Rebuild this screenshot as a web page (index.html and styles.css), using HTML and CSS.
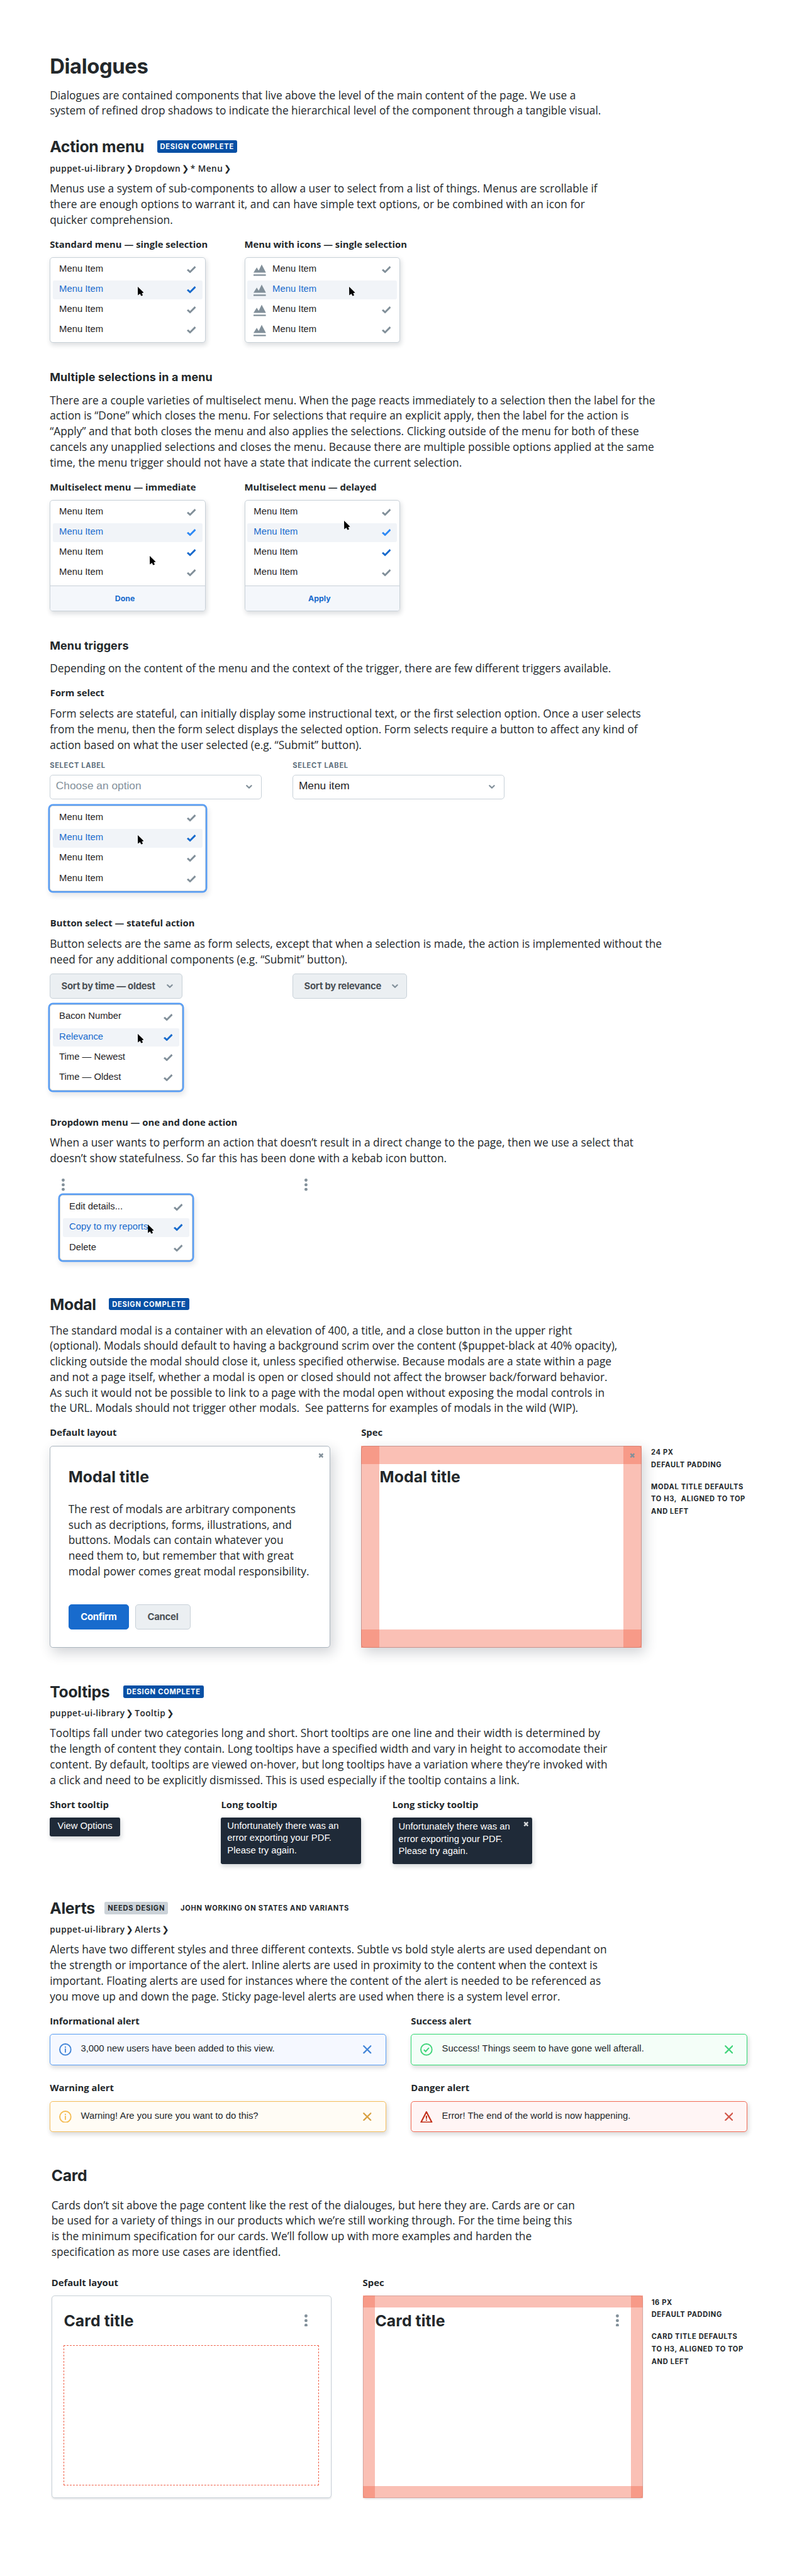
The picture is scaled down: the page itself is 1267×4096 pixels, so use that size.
FILE: index.html
```html
<!DOCTYPE html>
<html lang="en">
<head>
<meta charset="utf-8">
<title>Dialogues</title>
<link rel="stylesheet" href="styles.css">
</head>
<body>
<svg class="sprite" aria-hidden="true">
  <symbol id="check" viewBox="0 0 70 55"><path d="M0 33 10 23 25 36 60 0 70 11 25 55Z" fill="currentColor"/></symbol>
  <symbol id="cursor" viewBox="0 0 47 72"><path d="M0 0 47 46 31 48 39 66 27 72 17 53 1 66Z" fill="#000"/></symbol>
  <symbol id="chevron" viewBox="0 0 48 30"><path d="M6 6 24 23 42 6" fill="none" stroke="currentColor" stroke-width="11" stroke-linecap="round"/></symbol>
  <symbol id="chart" viewBox="0 0 32 32"><path d="M0 23.6 8.4 10l4.9 8L21 2.6l11 21zM0 28h32v4H0z" fill="currentColor"/></symbol>
  <symbol id="kebab" viewBox="0 0 8 32"><circle cx="4" cy="4" r="4" fill="currentColor"/><circle cx="4" cy="16" r="4" fill="currentColor"/><circle cx="4" cy="28" r="4" fill="currentColor"/></symbol>
  <symbol id="close" viewBox="0 0 14 14"><path d="M2.2 2.2 11.8 11.8M11.8 2.2 2.2 11.8" fill="none" stroke="currentColor" stroke-width="4"/></symbol>
  <symbol id="dismiss" viewBox="0 0 22 22"><path d="M2 2 20 20M20 2 2 20" fill="none" stroke="currentColor" stroke-width="3.6" stroke-linecap="round"/></symbol>
  <symbol id="info" viewBox="0 0 32 32"><circle cx="16" cy="16" r="14.3" fill="none" stroke="currentColor" stroke-width="3.2"/><path d="M14.5 8h3v3.4h-3zM14.5 13.5h3v10.5h-3z" fill="currentColor"/></symbol>
  <symbol id="success" viewBox="0 0 32 32"><circle cx="16" cy="16" r="14.3" fill="none" stroke="currentColor" stroke-width="3.2"/><path d="M9.5 16.5 14 21l8.5-9.5" fill="none" stroke="currentColor" stroke-width="3.2"/></symbol>
  <symbol id="danger" viewBox="0 0 32 32"><path d="M16 3.2 2.2 30h27.6z" fill="none" stroke="currentColor" stroke-width="3.4" stroke-linejoin="round"/><path d="M14.4 13h3.2v8h-3.2zM14.4 23h3.2v3h-3.2z" fill="currentColor"/></symbol>
</svg>

<main class="page">
  <h1>Dialogues</h1>
  <p class="lead">Dialogues are contained components that live above the level of the main content of the page. We use a<br>system of refined drop shadows to indicate the hierarchical level of the component through a tangible visual.</p>

  <section class="section action">
    <header class="head"><h2>Action menu</h2><span class="badge">DESIGN COMPLETE</span></header>
    <nav class="crumbs">puppet-ui-library <i>❯</i> Dropdown <i>❯</i> * Menu <i>❯</i></nav>
    <p>Menus use a system of sub-components to allow a user to select from a list of things. Menus are scrollable if<br>there are enough options to warrant it, and can have simple text options, or be combined with an icon for<br>quicker comprehension.</p>

    <div class="menus">
      <figure>
        <figcaption>Standard menu — single selection</figcaption>
        <div class="menu">
          <div class="item"><span>Menu Item</span><svg class="check"><use href="#check"/></svg></div>
          <div class="item active"><span>Menu Item</span><svg class="check"><use href="#check"/></svg></div>
          <div class="item"><span>Menu Item</span><svg class="check"><use href="#check"/></svg></div>
          <div class="item"><span>Menu Item</span><svg class="check"><use href="#check"/></svg></div>
          <svg class="cursor"><use href="#cursor"/></svg>
        </div>
      </figure>
      <figure>
        <figcaption>Menu with icons — single selection</figcaption>
        <div class="menu">
          <div class="item"><svg class="chart"><use href="#chart"/></svg><span>Menu Item</span><svg class="check"><use href="#check"/></svg></div>
          <div class="item active"><svg class="chart"><use href="#chart"/></svg><span>Menu Item</span></div>
          <div class="item"><svg class="chart"><use href="#chart"/></svg><span>Menu Item</span><svg class="check"><use href="#check"/></svg></div>
          <div class="item"><svg class="chart"><use href="#chart"/></svg><span>Menu Item</span><svg class="check"><use href="#check"/></svg></div>
          <svg class="cursor cursor-right"><use href="#cursor"/></svg>
        </div>
      </figure>
    </div>

    <h3>Multiple selections in a menu</h3>
    <p class="after-h3">There are a couple varieties of multiselect menu. When the page reacts immediately to a selection then the label for the<br>action is “Done” which closes the menu. For selections that require an explicit apply, then the label for the action is<br>“Apply” and that both closes the menu and also applies the selections. Clicking outside of the menu for both of these<br>cancels any unapplied selections and closes the menu. Because there are multiple possible options applied at the same<br>time, the menu trigger should not have a state that indicate the current selection.</p>

    <div class="menus">
      <figure>
        <figcaption>Multiselect menu — immediate</figcaption>
        <div class="menu">
          <div class="item"><span>Menu Item</span><svg class="check"><use href="#check"/></svg></div>
          <div class="item active light"><span>Menu Item</span><svg class="check"><use href="#check"/></svg></div>
          <div class="item checked"><span>Menu Item</span><svg class="check"><use href="#check"/></svg></div>
          <div class="item"><span>Menu Item</span><svg class="check"><use href="#check"/></svg></div>
          <div class="menu-footer">Done</div>
          <svg class="cursor cursor-low"><use href="#cursor"/></svg>
        </div>
      </figure>
      <figure>
        <figcaption>Multiselect menu — delayed</figcaption>
        <div class="menu">
          <div class="item"><span>Menu Item</span><svg class="check"><use href="#check"/></svg></div>
          <div class="item active light"><span>Menu Item</span><svg class="check"><use href="#check"/></svg></div>
          <div class="item checked"><span>Menu Item</span><svg class="check"><use href="#check"/></svg></div>
          <div class="item"><span>Menu Item</span><svg class="check"><use href="#check"/></svg></div>
          <div class="menu-footer">Apply</div>
          <svg class="cursor cursor-high"><use href="#cursor"/></svg>
        </div>
      </figure>
    </div>

    <h3>Menu triggers</h3>
    <p class="after-h3">Depending on the content of the menu and the context of the trigger, there are few different triggers available.</p>

    <h4>Form select</h4>
    <p class="after-h4">Form selects are stateful, can initially display some instructional text, or the first selection option. Once a user selects<br>from the menu, then the form select displays the selected option. Form selects require a button to affect any kind of<br>action based on what the user selected (e.g. “Submit” button).</p>
    <div class="triggers fields">
      <div class="field"><label>SELECT LABEL</label><div class="select placeholder"><span>Choose an option</span><svg class="chevron"><use href="#chevron"/></svg></div></div>
      <div class="field"><label>SELECT LABEL</label><div class="select"><span>Menu item</span><svg class="chevron"><use href="#chevron"/></svg></div></div>
    </div>
    <div class="menu focus">
      <div class="item"><span>Menu Item</span><svg class="check"><use href="#check"/></svg></div>
      <div class="item active"><span>Menu Item</span><svg class="check"><use href="#check"/></svg></div>
      <div class="item"><span>Menu Item</span><svg class="check"><use href="#check"/></svg></div>
      <div class="item"><span>Menu Item</span><svg class="check"><use href="#check"/></svg></div>
      <svg class="cursor"><use href="#cursor"/></svg>
    </div>

    <h4 class="far">Button select — stateful action</h4>
    <p class="after-h4">Button selects are the same as form selects, except that when a selection is made, the action is implemented without the<br>need for any additional components (e.g. “Submit” button).</p>
    <div class="triggers buttons">
      <div><button class="sort">Sort by time — oldest<svg class="chevron"><use href="#chevron"/></svg></button></div>
      <div><button class="sort sort-short">Sort by relevance<svg class="chevron"><use href="#chevron"/></svg></button></div>
    </div>
    <div class="menu focus narrow">
      <div class="item"><span>Bacon Number</span><svg class="check"><use href="#check"/></svg></div>
      <div class="item active"><span>Relevance</span><svg class="check"><use href="#check"/></svg></div>
      <div class="item"><span>Time — Newest</span><svg class="check"><use href="#check"/></svg></div>
      <div class="item"><span>Time — Oldest</span><svg class="check"><use href="#check"/></svg></div>
      <svg class="cursor"><use href="#cursor"/></svg>
    </div>

    <h4 class="far">Dropdown menu — one and done action</h4>
    <p class="after-h4">When a user wants to perform an action that doesn’t result in a direct change to the page, then we use a select that<br>doesn’t show statefulness. So far this has been done with a kebab icon button.</p>
    <div class="triggers kebabs">
      <svg class="kebab"><use href="#kebab"/></svg>
      <svg class="kebab"><use href="#kebab"/></svg>
    </div>
    <div class="menu focus narrow indent">
      <div class="item"><span>Edit details...</span><svg class="check"><use href="#check"/></svg></div>
      <div class="item active"><span>Copy to my reports</span><svg class="check"><use href="#check"/></svg></div>
      <div class="item"><span>Delete</span><svg class="check"><use href="#check"/></svg></div>
      <svg class="cursor"><use href="#cursor"/></svg>
    </div>
  </section>

  <section class="section modal-section">
    <header class="head"><h2>Modal</h2><span class="badge">DESIGN COMPLETE</span></header>
    <p class="after-h2">The standard modal is a container with an elevation of 400, a title, and a close button in the upper right<br>(optional). Modals should default to having a background scrim over the content ($puppet-black at 40% opacity),<br>clicking outside the modal should close it, unless specified otherwise. Because modals are a state within a page<br>and not a page itself, whether a modal is open or closed should not affect the browser back/forward behavior.<br>As such it would not be possible to link to a page with the modal open without exposing the modal controls in<br>the URL. Modals should not trigger other modals.&nbsp; See patterns for examples of modals in the wild (WIP).</p>
    <div class="samples">
      <figure>
        <figcaption>Default layout</figcaption>
        <div class="modal">
          <svg class="close"><use href="#close"/></svg>
          <div class="title">Modal title</div>
          <p>The rest of modals are arbitrary components<br>such as decriptions, forms, illustrations, and<br>buttons. Modals can contain whatever you<br>need them to, but remember that with great<br>modal power comes great modal responsibility.</p>
          <div class="actions"><button class="primary">Confirm</button><button class="secondary">Cancel</button></div>
        </div>
      </figure>
      <figure>
        <figcaption>Spec</figcaption>
        <div class="modal spec">
          <svg class="close"><use href="#close"/></svg>
          <div class="title">Modal title</div>
        </div>
      </figure>
      <aside class="notes">
        <div>24 PX<br>DEFAULT PADDING</div>
        <div>MODAL TITLE DEFAULTS<br>TO H3,&nbsp; ALIGNED TO TOP<br>AND LEFT</div>
      </aside>
    </div>
  </section>

  <section class="section tooltip-section">
    <header class="head"><h2>Tooltips</h2><span class="badge">DESIGN COMPLETE</span></header>
    <nav class="crumbs">puppet-ui-library <i>❯</i> Tooltip <i>❯</i></nav>
    <p>Tooltips fall under two categories long and short. Short tooltips are one line and their width is determined by<br>the length of content they contain. Long tooltips have a specified width and vary in height to accomodate their<br>content. By default, tooltips are viewed on-hover, but long tooltips have a variation where they’re invoked with<br>a click and need to be explicitly dismissed. This is used especially if the tooltip contains a link.</p>
    <div class="tooltips">
      <figure>
        <figcaption>Short tooltip</figcaption>
        <div class="tooltip short">View Options</div>
      </figure>
      <figure>
        <figcaption>Long tooltip</figcaption>
        <div class="tooltip">Unfortunately there was an<br>error exporting your PDF.<br>Please try again.</div>
      </figure>
      <figure>
        <figcaption>Long sticky tooltip</figcaption>
        <div class="tooltip sticky">Unfortunately there was an<br>error exporting your PDF.<br>Please try again.<svg class="close"><use href="#close"/></svg></div>
      </figure>
    </div>
  </section>

  <section class="section alert-section">
    <header class="head"><h2>Alerts</h2><span class="badge pending">NEEDS DESIGN</span><span class="status">JOHN WORKING ON STATES AND VARIANTS</span></header>
    <nav class="crumbs">puppet-ui-library <i>❯</i> Alerts <i>❯</i></nav>
    <p>Alerts have two different styles and three different contexts. Subtle vs bold style alerts are used dependant on<br>the strength or importance of the alert. Inline alerts are used in proximity to the content when the context is<br>important. Floating alerts are used for instances where the content of the alert is needed to be referenced as<br>you move up and down the page. Sticky page-level alerts are used when there is a system level error.</p>
    <div class="alerts">
      <figure>
        <figcaption>Informational alert</figcaption>
        <div class="alert alert-info"><svg class="alert-icon"><use href="#info"/></svg><span>3,000 new users have been added to this view.</span><svg class="dismiss"><use href="#dismiss"/></svg></div>
      </figure>
      <figure>
        <figcaption>Success alert</figcaption>
        <div class="alert alert-success"><svg class="alert-icon"><use href="#success"/></svg><span>Success! Things seem to have gone well afterall.</span><svg class="dismiss"><use href="#dismiss"/></svg></div>
      </figure>
      <figure>
        <figcaption>Warning alert</figcaption>
        <div class="alert alert-warning"><svg class="alert-icon"><use href="#info"/></svg><span>Warning! Are you sure you want to do this?</span><svg class="dismiss"><use href="#dismiss"/></svg></div>
      </figure>
      <figure>
        <figcaption>Danger alert</figcaption>
        <div class="alert alert-danger"><svg class="alert-icon"><use href="#danger"/></svg><span>Error! The end of the world is now happening.</span><svg class="dismiss"><use href="#dismiss"/></svg></div>
      </figure>
    </div>
  </section>

  <section class="section card-section">
    <header class="head"><h2>Card</h2></header>
    <p>Cards don’t sit above the page content like the rest of the dialouges, but here they are. Cards are or can<br>be used for a variety of things in our products which we’re still working through. For the time being this<br>is the minimum specification for our cards. We’ll follow up with more examples and harden the<br>specification as more use cases are identfied.</p>
    <div class="samples">
      <figure>
        <figcaption>Default layout</figcaption>
        <div class="card">
          <div class="card-head"><div class="title">Card title</div><svg class="kebab"><use href="#kebab"/></svg></div>
          <div class="slot"></div>
        </div>
      </figure>
      <figure>
        <figcaption>Spec</figcaption>
        <div class="card spec">
          <div class="card-head"><div class="title">Card title</div><svg class="kebab"><use href="#kebab"/></svg></div>
        </div>
      </figure>
      <aside class="notes">
        <div>16 PX<br>DEFAULT PADDING</div>
        <div>CARD TITLE DEFAULTS<br>TO H3, ALIGNED TO TOP<br>AND LEFT</div>
      </aside>
    </div>
  </section>
</main>
</body>
</html>
```
FILE: styles.css
```css
html {
  font-size: 6.187px;
}

*,
*::before,
*::after {
  box-sizing: border-box;
}

body {
  margin: 0;
  background: #fff;
  color: #23282b;
  font: 2.8rem/4rem "Open Sans", sans-serif;
}

h1, h2, h3, h4, p, figure {
  margin: 0;
}

svg {
  display: block;
  flex: none;
}

.sprite {
  position: absolute;
  width: 0;
  height: 0;
}

.page {
  width: 100%;
  padding: 14.1rem 0 19.5rem 12.8rem;
  overflow: hidden;
}

p {
  white-space: nowrap;
}

/* Headings */

h1 {
  font: 700 5.3rem/6rem Inter, sans-serif;
  letter-spacing: -0.06rem;
}

.lead {
  margin-top: 2.3rem;
}

.section {
  margin-top: 9.6rem;
}

.action {
  margin-top: 5.7rem;
}

.head {
  display: flex;
  gap: 3.3rem;
  height: 3.2rem;
}

h2,
.title {
  font: 700 4rem/3.5rem Inter, sans-serif;
  letter-spacing: -0.04rem;
  white-space: nowrap;
}

h3 {
  margin-top: 7.15rem;
  font: 700 2.9rem/3.6rem Inter, sans-serif;
  letter-spacing: 0.023rem;
}

h4,
figcaption {
  font: 700 2.4rem/3.2rem "Open Sans", sans-serif;
  white-space: nowrap;
}

h4 {
  margin: 2.8rem 0 0 0.1rem;
}

h4.far {
  margin-top: 6.65rem;
}

figcaption {
  margin-bottom: 1.7rem;
}

.after-h2 {
  margin-top: 3.1rem;
}

.after-h3 {
  margin-top: 1.95rem;
}

.after-h4 {
  margin-top: 1.6rem;
}

.badge,
.status {
  height: 3.2rem;
  font: 700 1.8rem/3.4rem Inter, sans-serif;
  letter-spacing: 0.12rem;
  white-space: nowrap;
}

.badge {
  width: 20.6rem;
  padding-left: 0.8rem;
  border-radius: 0.4rem;
  background: #0850a5;
  color: #fff;
}

.badge.pending {
  width: 16.2rem;
  background: #cbd2d8;
  color: #23282b;
}

.crumbs {
  margin: 2.5rem 0 1.6rem;
  font: 600 2.2rem/3rem "Open Sans", "DejaVu Sans", sans-serif;
  letter-spacing: 0.075rem;
  white-space: nowrap;
}

.crumbs i {
  display: inline-flex;
  justify-content: center;
  width: 1.1rem;
  margin: 0 0.1rem 0 0.05rem;
  font-style: normal;
}

/* Menus */

.menus {
  display: flex;
  gap: 10rem;
  margin-top: 2.8rem;
}

.menus figure {
  width: 40rem;
}

.menu {
  position: relative;
  display: flex;
  flex-direction: column;
  gap: 0.4rem;
  width: 40rem;
  padding: 0.64rem;
  border: 0.2rem solid #c8d1d8;
  border-radius: 0.8rem;
  background: #fff;
  box-shadow: 0.2rem 0.5rem 1.2rem rgba(30, 42, 56, 0.15);
}

.menu.focus {
  margin-top: 1.6rem;
  box-shadow: 0 0 0 0.4rem #589df4, 0.3rem 0.8rem 1.4rem 0.2rem rgba(30, 42, 56, 0.12);
}

.menu.narrow {
  width: 34rem;
}

.menu.indent {
  margin: 1rem 0 0 2.6rem;
}

.item {
  display: flex;
  align-items: center;
  gap: 1.6rem;
  height: 4.8rem;
  padding: 0 1.6rem;
  border-radius: 0.4rem;
  color: #1f2326;
  font: 2.4rem/4.5rem "Liberation Sans", sans-serif;
}

.item span {
  flex: 1;
  height: 4.8rem;
  white-space: nowrap;
}

.item.active {
  background: #f1f4f8;
  color: #186bcd;
}

.check {
  width: 2.35rem;
  height: 1.85rem;
  color: #82909a;
}

.active .check,
.checked .check {
  color: #186bcd;
}

.light .check {
  color: #2f8af5;
}

.chart {
  width: 3.2rem;
  height: 3.2rem;
  color: #82909a;
}

.menu-footer {
  height: 6.44rem;
  margin: 0.4rem -0.64rem -0.64rem;
  padding-right: 1.4rem;
  border-top: 0.2rem solid #c8d1d8;
  border-radius: 0 0 0.6rem 0.6rem;
  background: #f4f7fb;
  color: #1a6bcd;
  font: 700 2rem/6.4rem Inter, sans-serif;
  text-align: center;
}

.cursor {
  position: absolute;
  left: 22.4rem;
  top: 7.4rem;
  width: 1.57rem;
  height: 2.4rem;
}

.cursor-right {
  left: 26.8rem;
}

.cursor-low {
  left: 25.5rem;
  top: 14.3rem;
}

.cursor-high {
  left: 25.5rem;
  top: 5.2rem;
}

/* Triggers */

.triggers {
  display: grid;
  grid-template-columns: 54.4rem 54.4rem;
  column-gap: 8rem;
}

.fields {
  margin-top: 2.25rem;
}

.field label {
  display: block;
  margin-bottom: 1.05rem;
  color: #5d6f7c;
  font: 700 1.8rem/2.4rem Inter, sans-serif;
  letter-spacing: 0.11rem;
}

.select {
  display: flex;
  align-items: center;
  justify-content: space-between;
  height: 6.4rem;
  padding: 0 2.2rem 0 1.4rem;
  border: 0.2rem solid #c8d1d8;
  border-radius: 0.8rem;
  background: #fff;
  color: #1f2326;
  font: 2.8rem/3.2rem "Liberation Sans", sans-serif;
}

.select span {
  margin-top: -0.34rem;
}

.select.placeholder span {
  color: #84919b;
}

.chevron {
  width: 1.6rem;
  height: 1rem;
  color: #82909a;
}

.buttons {
  margin-top: 1.7rem;
}

button {
  height: 6.4rem;
  margin: 0;
  border: 0.2rem solid #c8d1d8;
  border-radius: 0.8rem;
  background: #ebeff2;
  color: #4b5156;
  font: 700 2.4rem/3.2rem Inter, sans-serif;
  letter-spacing: -0.04rem;
  white-space: nowrap;
}

.sort {
  display: flex;
  align-items: center;
  justify-content: space-between;
  width: 34rem;
  padding: 0.2rem 2.2rem 0 2.8rem;
}

.sort .chevron {
  margin-top: -0.1rem;
}

.sort-short {
  width: 29.4rem;
}

.kebabs {
  margin: 3.3rem 0 0 3rem;
}

.kebab {
  width: 0.8rem;
  height: 3.2rem;
  color: #82909a;
}

/* Modal and card samples */

.samples {
  display: flex;
  gap: 8rem;
  margin-top: 2.8rem;
}

.modal,
.card {
  position: relative;
  width: 72rem;
  height: 52rem;
  border: 0.2rem solid #c8d1d8;
  border-radius: 0.8rem;
  background: #fff;
}

.modal {
  padding: 6.2rem 4.6rem;
  border-color: #aab5be;
  box-shadow: 0.8rem 1.2rem 3.2rem rgba(30, 42, 56, 0.2);
}

.close {
  position: absolute;
  top: 1.6rem;
  right: 1.5rem;
  z-index: 1;
  width: 1.4rem;
  height: 1.4rem;
  color: #82909a;
}

.title {
  letter-spacing: 0.02rem;
}

.modal p {
  margin-top: 4.4rem;
}

.actions {
  display: flex;
  gap: 1.6rem;
  margin-top: 6.6rem;
}

.actions button {
  width: 14.2rem;
  padding: 0.2rem 0 0;
}

.actions .primary {
  width: 15.6rem;
  border-color: #186bcd;
  background: #186bcd;
  color: #fff;
}

/* Padding bands: the corners darken where the two pairs overlap */
.spec::before,
.spec::after {
  content: "";
  position: absolute;
  inset: -1px;
  border: 0 solid rgba(242, 98, 70, 0.4);
}

.spec::before {
  border-width: 4.8rem 0;
}

.spec::after {
  border-width: 0 4.8rem;
}

.card {
  padding: 4.6rem 3.04rem 0;
  box-shadow: 0 0.2rem 0.4rem rgba(30, 42, 56, 0.12);
}

.card.spec::before {
  border-width: 3.2rem 0;
}

.card.spec::after {
  border-width: 0 3.2rem;
}

.card-head {
  display: flex;
  justify-content: space-between;
  height: 3.5rem;
  padding-right: 2.9rem;
}

.slot {
  height: 36rem;
  margin-top: 4.5rem;
  border: 0.2rem dashed #f0624a;
}

.notes {
  display: flex;
  flex-direction: column;
  gap: 2.4rem;
  margin: 5.15rem 0 0 -5.5rem;
  font: 700 1.8rem/3.2rem Inter, sans-serif;
  letter-spacing: 0.105rem;
  white-space: nowrap;
}

/* Tooltips */

.tooltips {
  display: grid;
  grid-template-columns: repeat(3, 44rem);
  align-items: start;
  margin-top: 2.8rem;
}

.tooltip {
  position: relative;
  width: 36rem;
  height: 12rem;
  padding: 0.57rem 1.6rem;
  border-radius: 0.4rem;
  background: #1f2a38;
  box-shadow: 0.2rem 0.5rem 1.2rem rgba(30, 42, 56, 0.18);
  color: #fff;
  font: 2.4rem/3.2rem "Liberation Sans", sans-serif;
  white-space: nowrap;
}

.tooltip.short {
  width: 18rem;
  height: 4.8rem;
  padding: 0.57rem 2rem;
}

.tooltip.sticky {
  padding-top: 0.77rem;
}

.tooltip .close {
  top: 1rem;
  right: 0.9rem;
  color: #d5d7da;
}

/* Alerts */

.alerts {
  display: grid;
  grid-template-columns: 86.4rem 86.4rem;
  gap: 4.35rem 6.4rem;
  margin-top: 2.8rem;
}

.alert {
  display: flex;
  align-items: center;
  gap: 2.4rem;
  height: 8rem;
  padding: 0 3.5rem 0 2.2rem;
  border: 0.2rem solid;
  border-radius: 0.8rem;
  box-shadow: 0.2rem 0.5rem 1.2rem rgba(0, 0, 0, 0.15);
  font: 2.4rem/3.2rem "Liberation Sans", sans-serif;
}

.alert span {
  flex: 1;
  margin-top: -0.34rem;
  white-space: nowrap;
}

.alert-icon {
  width: 3.2rem;
  height: 3.2rem;
}

.dismiss {
  width: 2.2rem;
  height: 2.2rem;
}

.alert-info {
  border-color: #589df4;
  background: #f5f8ff;
}

.alert-info svg {
  color: #4285d8;
}

.alert-success {
  border-color: #2fd971;
  background: #f4fef8;
}

.alert-success svg {
  color: #40d47a;
}

.alert-warning {
  border-color: #f5bd5a;
  background: #fffcf5;
}

.alert-warning .alert-icon {
  color: #f5bd55;
}

.alert-warning .dismiss {
  color: #d8a040;
}

.alert-danger {
  border-color: #f26b55;
  background: #fff5f5;
}

.alert-danger .alert-icon {
  color: #c22f18;
}

.alert-danger .dismiss {
  color: #d2574a;
}

/* Per-section spacing */

.tooltip-section .head {
  gap: 3.55rem;
}

.alert-section .head {
  gap: 2.5rem;
}

.alert-section .status {
  margin-left: 0.8rem;
}

.card-section {
  margin: 9.5rem 0 0 0.4rem;
}

.card-section p {
  margin-top: 4rem;
}

.card-section .samples {
  margin-top: 4.4rem;
}

.card-section .notes {
  margin-left: -5.8rem;
}
```
